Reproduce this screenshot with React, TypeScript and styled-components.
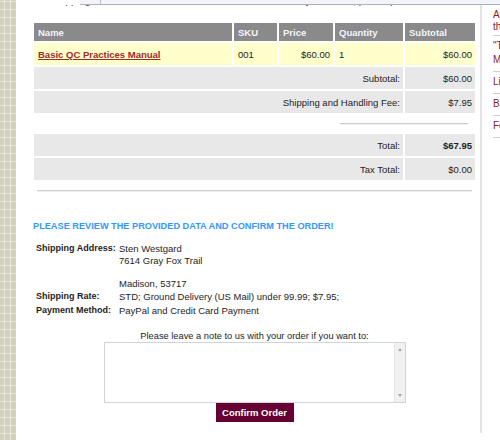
import React from 'react';
import styled, { createGlobalStyle } from 'styled-components';

const GlobalStyle = createGlobalStyle`
  * { box-sizing: border-box; }
  body {
    margin: 0;
    background: #ffffff;
    font-family: 'Liberation Sans', Arial, sans-serif;
    color: #1e1e1e;
    overflow: hidden;
  }
`;

const Page = styled.div`
  position: relative;
  display: flex;
  align-items: flex-start;
  width: 500px;
  min-height: 440px;
  overflow: hidden;
`;

const Strip = styled.div`
  align-self: stretch;
  width: 16px;
  flex-shrink: 0;
  background-color: #d2cfbb;
  background-image:
    repeating-linear-gradient(90deg, transparent 0 4px, rgba(255, 255, 255, 0.5) 4px 5px, transparent 5px 6px),
    repeating-linear-gradient(0deg, transparent 0 6px, rgba(255, 255, 255, 0.45) 6px 7px, transparent 7px 8px);
`;

const TopBar = styled.div`
  position: absolute;
  top: 0;
  left: 80px;
  right: 0;
  height: 5px;
  background: #f3f4f7;
  border-bottom: 1px solid #a9b3c4;

  &::before {
    content: '';
    position: absolute;
    left: 20px;
    top: 0;
    bottom: 0;
    border-left: 1px solid #b8bfcc;
  }
`;

const Main = styled.main`
  width: 466px;
  flex-shrink: 0;
  padding: 0 3px 11px 16px;
  border-right: 2px solid #e4e4e4;
  font-size: 9.5px;
`;

/* only the descenders of the line above the table are still on screen */
const IntroClip = styled.div`
  height: 5px;
  margin-top: 5px;
  overflow: hidden;
`;

const IntroText = styled.div`
  margin-top: -11px;
  padding-left: 18px;
  font-size: 10.5px;
  line-height: 12px;
  color: #8b2a2a;
  white-space: nowrap;
`;

const OrderTable = styled.table`
  width: 445px;
  margin-top: 11px;
  border-spacing: 2px;
  table-layout: fixed;
  font-size: 9.5px;
`;

const HeadCell = styled.th<{ $w: number }>`
  width: ${p => p.$w}px;
  height: 18px;
  padding: 0 4px;
  background: #8a8a8a;
  color: #f2f4ff;
  font-weight: bold;
  text-align: left;
`;

type Tone = 'item' | 'sum' | 'none';

const Cell = styled.td<{ $tone?: Tone; $right?: boolean; $bold?: boolean }>`
  height: ${p => (p.$tone === 'none' ? '17px' : '22px')};
  padding: 0 ${p => (p.$right ? '3px' : '4px')} 0 4px;
  background: ${p =>
    p.$tone === 'item' ? '#ffffcc' : p.$tone === 'sum' ? '#e8e8e8' : 'transparent'};
  text-align: ${p => (p.$right ? 'right' : 'left')};
  font-weight: ${p => (p.$bold ? 'bold' : 'normal')};
  vertical-align: middle;
`;

const ProductLink = styled.a`
  color: #9c2a2a;
  font-weight: bold;
  text-decoration: underline;
`;

const ShortRule = styled.div`
  margin: 0 3px 0 1px;
  border-top: 1px solid #cbcbcb;
  border-bottom: 1px solid #f0f0f0;
`;

const Rule = styled.hr`
  margin: 8px 5px 0;
  height: 0;
  border: 0;
  border-top: 1px solid #cfcfcf;
  border-bottom: 1px solid #f0f0f0;
`;

const Notice = styled.h3`
  margin: 28px 0 0 1px;
  font-size: 9.2px;
  line-height: 12px;
  font-weight: bold;
  color: #3399ff;
`;

const DetailsTable = styled.table`
  margin: 10px 0 0 4px;
  border-spacing: 0;
  font-size: 9.5px;
  line-height: 11.5px;
`;

const Label = styled.th`
  width: 83px;
  padding: 1px 0;
  font-size: 9px;
  text-align: left;
  vertical-align: top;
  white-space: nowrap;
`;

const Value = styled.td`
  padding: 1px 0;
  vertical-align: top;
`;

const NoteBlock = styled.div`
  display: flex;
  flex-direction: column;
  align-items: center;
  margin-top: 13px;
`;

const NoteLabel = styled.label`
  line-height: 12px;
  font-size: 9.3px;
`;

const NoteFrame = styled.div`
  display: flex;
  width: 302px;
  height: 61px;
  border: 1px solid #cfd3da;
  background: #ffffff;
`;

const NoteArea = styled.textarea`
  flex: 1;
  min-width: 0;
  margin: 0;
  padding: 2px;
  border: 0;
  outline: none;
  resize: none;
  font-family: 'Liberation Sans', Arial, sans-serif;
  font-size: 10px;
`;

const ScrollTrack = styled.div`
  display: flex;
  flex-direction: column;
  justify-content: space-between;
  align-items: center;
  width: 11px;
  padding: 5px 0;
  background: #f1f1f1;
  border-left: 1px solid #e6e6e6;
`;

const Arrow = styled.span<{ $down?: boolean }>`
  width: 0;
  height: 0;
  border-left: 2.5px solid transparent;
  border-right: 2.5px solid transparent;
  ${p =>
    p.$down ? 'border-top: 3px solid #a8a8a8;' : 'border-bottom: 3px solid #a8a8a8;'}
`;

const ConfirmButton = styled.button`
  width: 78px;
  height: 19px;
  padding: 0;
  border: 0;
  background: #660033;
  color: #ffffff;
  font-family: 'Liberation Sans', Arial, sans-serif;
  font-size: 9.5px;
  font-weight: bold;
  cursor: pointer;
`;

const Sidebar = styled.aside`
  width: 150px;
  flex-shrink: 0;
  padding: 0 0 0 11px;
  font-size: 10px;
  color: #8b2323;
`;

const SideItem = styled.div`
  padding: 3px 0 4px;
  line-height: 14px;
  border-bottom: 1px solid #cfcfcf;
  white-space: nowrap;

  &:first-child {
    padding: 9px 0 2px;
    line-height: 12px;
  }
`;

const columns: [string, number][] = [
  ['Name', 198],
  ['SKU', 43],
  ['Price', 54],
  ['Quantity', 68],
  ['Subtotal', 70],
];

const App: React.FC = () => {
  return (
    <Page>
      <GlobalStyle />
      <Strip />
      <Main>
        <IntroClip>
          <IntroText>
            Shipping costs are calculated and added to the total of your order, per shipment.
          </IntroText>
        </IntroClip>

        <OrderTable>
          <thead>
            <tr>
              {columns.map(([title, w]) => (
                <HeadCell key={title} $w={w}>
                  {title}
                </HeadCell>
              ))}
            </tr>
          </thead>
          <tbody>
            <tr>
              <Cell $tone="item">
                <ProductLink href="#">Basic QC Practices Manual</ProductLink>
              </Cell>
              <Cell $tone="item">001</Cell>
              <Cell $tone="item" $right>
                $60.00
              </Cell>
              <Cell $tone="item">1</Cell>
              <Cell $tone="item" $right>
                $60.00
              </Cell>
            </tr>
            <tr>
              <Cell $tone="sum" $right colSpan={4}>
                Subtotal:
              </Cell>
              <Cell $tone="sum" $right>
                $60.00
              </Cell>
            </tr>
            <tr>
              <Cell $tone="sum" $right colSpan={4}>
                Shipping and Handling Fee:
              </Cell>
              <Cell $tone="sum" $right>
                $7.95
              </Cell>
            </tr>
            <tr>
              <Cell $tone="none" colSpan={3} />
              <Cell $tone="none" colSpan={2}>
                <ShortRule />
              </Cell>
            </tr>
            <tr>
              <Cell $tone="sum" $right colSpan={4}>
                Total:
              </Cell>
              <Cell $tone="sum" $right $bold>
                $67.95
              </Cell>
            </tr>
            <tr>
              <Cell $tone="sum" $right colSpan={4}>
                Tax Total:
              </Cell>
              <Cell $tone="sum" $right>
                $0.00
              </Cell>
            </tr>
          </tbody>
        </OrderTable>

        <Rule />

        <Notice>PLEASE REVIEW THE PROVIDED DATA AND CONFIRM THE ORDER!</Notice>

        <DetailsTable>
          <tbody>
            <tr>
              <Label>Shipping Address:</Label>
              <Value>
                Sten Westgard
                <br />
                7614 Gray Fox Trail
                <br />
                <br />
                Madison, 53717
              </Value>
            </tr>
            <tr>
              <Label>Shipping Rate:</Label>
              <Value>STD; Ground Delivery (US Mail) under 99.99; $7.95;</Value>
            </tr>
            <tr>
              <Label>Payment Method:</Label>
              <Value>PayPal and Credit Card Payment</Value>
            </tr>
          </tbody>
        </DetailsTable>

        <NoteBlock>
          <NoteLabel htmlFor="order-note">
            Please leave a note to us with your order if you want to:
          </NoteLabel>
          <NoteFrame>
            <NoteArea id="order-note" />
            <ScrollTrack>
              <Arrow />
              <Arrow $down />
            </ScrollTrack>
          </NoteFrame>
          <ConfirmButton type="button">Confirm Order</ConfirmButton>
        </NoteBlock>
      </Main>

      <Sidebar>
        <SideItem>
          Available now:
          <br />
          the complete QC set
        </SideItem>
        <SideItem>
          "The Westgard Rules"
          <br />
          Manual
        </SideItem>
        <SideItem>Links</SideItem>
        <SideItem>Books</SideItem>
        <SideItem>Feedback</SideItem>
      </Sidebar>

      <TopBar />
    </Page>
  );
};

export default App;
